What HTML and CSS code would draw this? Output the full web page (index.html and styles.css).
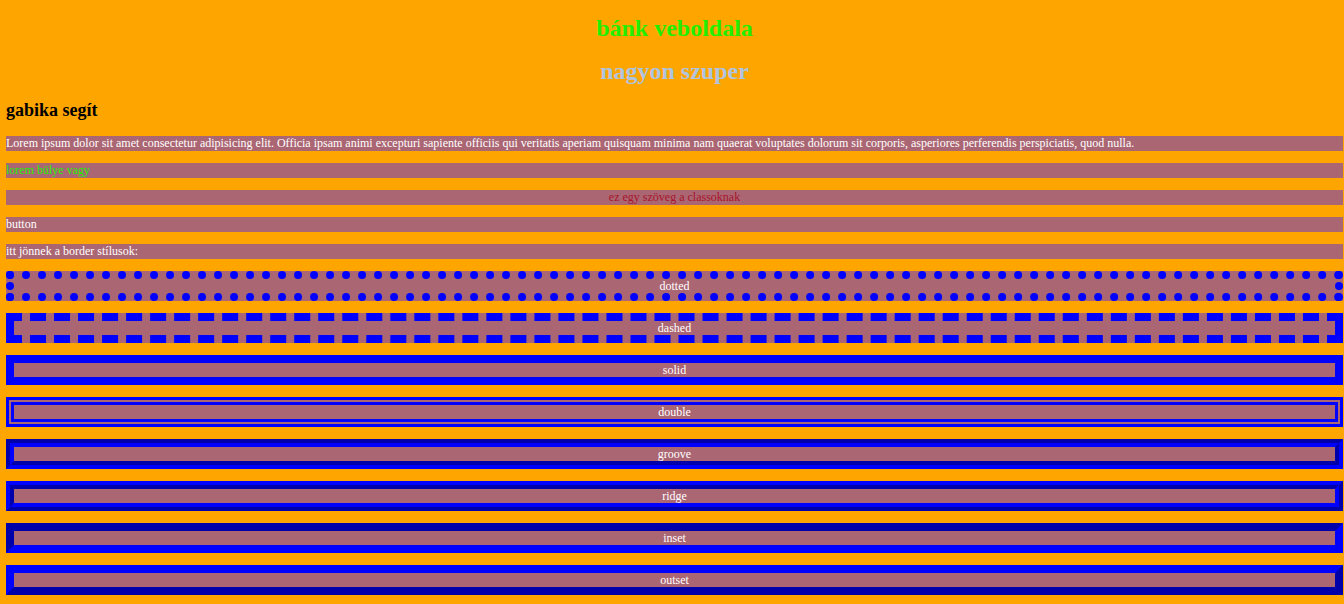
FILE: index.html
```html
<!DOCTYPE html>
<html>
<head>
<meta charset="utf-8">
<title>bánk veboldala</title>
<link rel="stylesheet" href="styles.css">
</head>
<body>
<h1 class="title">bánk veboldala</h1>
<h2 class="subtitle">nagyon szuper</h2>
<h3 class="helper">gabika segít</h3>
<p class="bar">Lorem ipsum dolor sit amet consectetur adipisicing elit. Officia ipsam animi excepturi sapiente officiis qui veritatis aperiam quisquam minima nam quaerat voluptates dolorum sit corporis, asperiores perferendis perspiciatis, quod nulla.</p>
<p class="bar green">lorem bülye vagy</p>
<p class="bar red">ez egy szöveg a classoknak</p>
<p class="bar">button</p>
<p class="bar">itt jönnek a border stílusok:</p>
<p class="box dotted">dotted</p>
<p class="box dashed">dashed</p>
<p class="box solid">solid</p>
<p class="box double">double</p>
<p class="box groove">groove</p>
<p class="box ridge">ridge</p>
<p class="box inset">inset</p>
<p class="box outset">outset</p>
</body>
</html>
```
FILE: styles.css
```css
html {
  background: #ffa500;
}
body {
  margin: 0 1px 0 6px;
  padding-top: 14px;
  font-family: "Liberation Serif", "Times New Roman", serif;
  font-size: 12px;
  color: #ffffff;
}
.title {
  margin: 0;
  font-size: 24px;
  line-height: 28px;
  text-align: center;
  color: #22ee00;
}
.subtitle {
  margin: 16px 0 0;
  font-size: 24px;
  line-height: 26px;
  text-align: center;
  color: #b0c4de;
}
.helper {
  margin: 16px 0 16px;
  font-size: 18px;
  line-height: 20px;
  color: #000000;
}
.bar {
  margin: 12px 0;
  line-height: 15px;
  background: #aa6673;
}
.green {
  color: #22ee00;
}
.red {
  color: #a8142a;
  text-align: center;
}
.box {
  margin: 12px 0;
  line-height: 14px;
  background: #aa6673;
  text-align: center;
  border: 8px solid #0000ff;
}
.dotted { border-style: dotted; }
.dashed { border-style: dashed; }
.solid { border-style: solid; }
.double { border-style: double; }
.groove { border-style: groove; }
.ridge { border-style: ridge; }
.inset { border-style: inset; }
.outset { border-style: outset; }
```
